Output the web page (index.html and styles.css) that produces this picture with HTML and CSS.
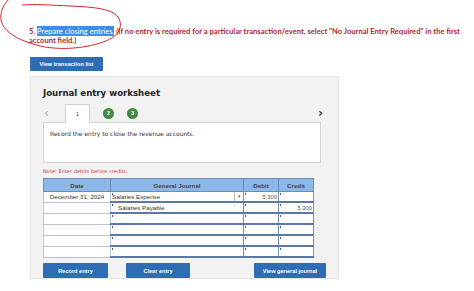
FILE: index.html
```html
<!DOCTYPE html>
<html lang="en">
<head>
  <meta charset="UTF-8" />
  <title>Journal entry worksheet</title>
  <link rel="stylesheet" href="styles.css">
</head>
<body>
  <div class="page">
    <p class="prompt"><span>5.</span> <span class="hl">Prepare closing entries.</span> <span>(If no entry is required for a particular transaction/event, select "No Journal Entry Required" in the first</span><br><span>account field.)</span></p>

    <button class="btn btn-list">View transaction list</button>

    <div class="panel">
      <h1>Journal entry worksheet</h1>

      <div class="tabs">
        <span class="arrow prev">&lsaquo;</span>
        <span class="tab">1</span>
        <span class="dot">2</span>
        <span class="dot">3</span>
        <span class="arrow next">&rsaquo;</span>
      </div>

      <div class="task">Record the entry to close the revenue accounts.</div>

      <p class="note">Note: Enter debits before credits.</p>

      <table class="journal">
        <tr>
          <th class="c-date">Date</th>
          <th class="c-acct">General Journal</th>
          <th class="c-num">Debit</th>
          <th class="c-num">Credit</th>
        </tr>
        <tr>
          <td class="date">December 31, 2024</td>
          <td class="acct"><span class="sel">Salaries Expense</span><span class="drop">&#9662;</span></td>
          <td class="amt">5,300</td>
          <td class="amt"></td>
        </tr>
        <tr>
          <td class="date"></td>
          <td class="acct"><span class="indent">Salaries Payable</span></td>
          <td class="amt"></td>
          <td class="amt">5,300</td>
        </tr>
        <tr><td class="date"></td><td class="acct"></td><td class="amt"></td><td class="amt"></td></tr>
        <tr><td class="date"></td><td class="acct"></td><td class="amt"></td><td class="amt"></td></tr>
        <tr><td class="date"></td><td class="acct"></td><td class="amt"></td><td class="amt"></td></tr>
        <tr><td class="date"></td><td class="acct"></td><td class="amt"></td><td class="amt"></td></tr>
      </table>

      <div class="actions">
        <button class="btn btn-record">Record entry</button>
        <button class="btn btn-clear">Clear entry</button>
        <button class="btn btn-view">View general journal</button>
      </div>
    </div>
  </div>

  <!-- hand-drawn circle over the question -->
  <svg class="scribble" width="130" height="52" viewBox="0 0 130 52">
    <path d="M8 0 C3 6 0 12 1 20 C3 32 20 42 45 47 C70 51 98 46 112 38 C120 33 123 24 118 17 C112 9 95 7 70 6 C50 5 35 4 22 5"
          fill="none" stroke="#d8262b" stroke-width="1" />
  </svg>
</body>
</html>
```

FILE: styles.css
```css
body {
  margin: 0;
  background: #fff;
  font-family: "Liberation Sans", Arial, sans-serif;
}
.page {
  padding: 27px 0 0 29px;
}
.prompt {
  margin: 0;
  width: 440px;
  font-family: Lato, "Liberation Sans", sans-serif;
  font-weight: 700;
  font-size: 7.6px;
  line-height: 9px;
  color: #b1262b;
  white-space: nowrap;
}
.hl {
  background: #3b8fea;
  color: #fff;
  font-weight: 400;
}

.btn {
  display: block;
  border: none;
  border-radius: 1px;
  background: #2e6db4;
  color: #fff;
  font-family: "Liberation Sans", Arial, sans-serif;
  font-weight: 700;
  font-size: 5.6px;
  padding: 0;
  height: 15px;
  cursor: pointer;
}
.btn-list {
  margin: 12px 0 0 1px;
  width: 73px;
  height: 14px;
}

.panel {
  margin: 5px 0 0 1px;
  width: 295px;
  height: 190px;
  padding: 11px 0 0 12px;
  background: #f2f2f2;
  border: 1px solid #e3e3e3;
}
.panel h1 {
  margin: 0;
  font-family: "DejaVu Sans", Verdana, sans-serif;
  font-size: 8.6px;
  font-weight: 700;
  line-height: 10px;
  color: #222;
}

.tabs {
  display: flex;
  align-items: center;
  height: 18px;
  margin-top: 6px;
  width: 280px;
}
.arrow {
  font-family: "DejaVu Sans", sans-serif;
  font-size: 12px;
  line-height: 12px;
}
.prev {
  color: #aaa;
  margin-left: 1px;
  width: 21px;
}
.next {
  color: #333;
  margin-left: auto;
  font-weight: 700;
}
.tab {
  align-self: stretch;
  width: 23px;
  margin-bottom: -1px;
  background: #fff;
  border: 1px solid #d0d0d0;
  border-bottom: none;
  font-size: 5.5px;
  display: flex;
  align-items: center;
  justify-content: center;
  position: relative;
  z-index: 1;
  color: #333;
}
.dot {
  width: 11px;
  height: 11px;
  border-radius: 50%;
  background: #3f8a3e;
  color: #fff;
  font-size: 5.5px;
  font-weight: 700;
  display: flex;
  align-items: center;
  justify-content: center;
  margin-left: 13px;
}

.task {
  width: 270px;
  height: 39px;
  background: #fff;
  border: 1px solid #d0d0d0;
  padding: 0 0 0 6px;
  font-family: "DejaVu Sans", Verdana, sans-serif;
  font-size: 6px;
  line-height: 22px;
  color: #333;
}

.note {
  margin: 5px 0 0;
  font-family: "DejaVu Sans", Verdana, sans-serif;
  font-size: 5.1px;
  line-height: 6px;
  color: #c44040;
}

.journal {
  margin-top: 4px;
  border-collapse: collapse;
  font-size: 6.2px;
  color: #333;
}
.journal th {
  height: 12px;
  padding: 0;
  background: #8cb7e6;
  border: 1px solid #6a8cb5;
  font-weight: 700;
  color: #444;
}
.journal td {
  height: 9px;
  padding: 0;
  line-height: 8px;
  background: #fff;
  border: 1px solid #7b90b0;
  position: relative;
}
.c-date { width: 66px; }
.c-acct { width: 132px; }
.c-num { width: 34px; }
.journal td.date {
  text-align: center;
  border-color: #b8c4d4;
}
.journal td.acct {
  border-left: 1px solid #3e5f98;
  border-bottom: 2px solid #5a78a8;
}
.journal td.amt {
  text-align: right;
  padding-right: 1px;
  font-size: 5.8px;
  color: #555;
  border-bottom: 2px solid #5a78a8;
}
.journal td.acct::before,
.journal td.amt::before {
  content: "";
  position: absolute;
  left: 1px;
  top: 1px;
  width: 1px;
  height: 2px;
  background: #3e5f98;
}
.sel {
  padding-left: 1px;
}
.drop {
  position: absolute;
  right: 0;
  top: 0;
  bottom: 0;
  width: 8px;
  border-left: 1px solid #bbb;
  font-size: 5px;
  line-height: 9px;
  text-align: center;
  color: #666;
}
.indent {
  padding-left: 7px;
}

.actions {
  display: flex;
  margin-top: 5px;
  width: 283px;
}
.btn-record {
  width: 65px;
}
.btn-clear {
  width: 64px;
  margin-left: 18px;
}
.btn-view {
  width: 72px;
  margin-left: auto;
}

.scribble {
  position: absolute;
  left: 0;
  top: 0;
}
```
